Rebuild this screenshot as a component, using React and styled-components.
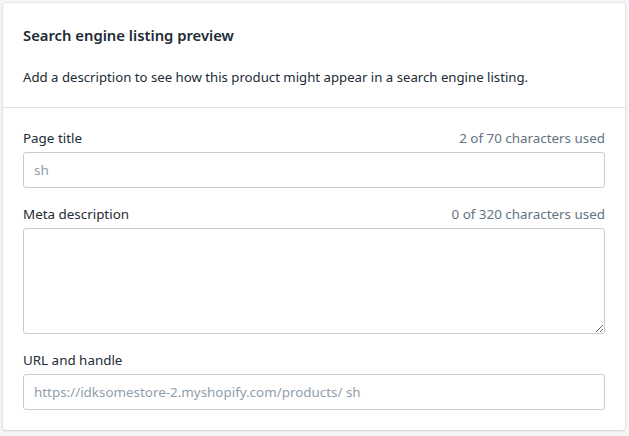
import React, { useState } from 'react';
import styled, { createGlobalStyle } from 'styled-components';

const GlobalStyle = createGlobalStyle`
  html, body {
    margin: 0;
    padding: 0;
    background-color: #f4f6f8;
  }
  body {
    font-family: "Noto Sans", "Open Sans", Arial, sans-serif;
    color: #212b36;
  }
  * {
    box-sizing: border-box;
  }
`;

const Page = styled.div`
  padding: 3px 4px 4px 3px;
`;

const Card = styled.section`
  background-color: #ffffff;
  border-radius: 3px;
  box-shadow: 0 0 0 1px rgba(63, 63, 68, 0.05), 0 1px 3px 0 rgba(63, 63, 68, 0.15);
`;

const Section = styled.div`
  padding: 20px;
  border-top: ${(p) => (p.divided ? '1px solid #dfe3e8' : 'none')};
`;

const Title = styled.h2`
  margin: 0;
  font-size: 14.8px;
  line-height: 24px;
  font-weight: 600;
`;

const Description = styled.p`
  margin: 20px 0 0;
  font-size: 13.2px;
  line-height: 20px;
`;

const Field = styled.div`
  display: flex;
  flex-direction: column;
  gap: 4px;
  & + & {
    margin-top: 16px;
  }
`;

const LabelRow = styled.div`
  display: flex;
  justify-content: space-between;
  align-items: center;
  font-size: 13.4px;
  line-height: 20px;
`;

const Label = styled.label``;

const Counter = styled.span`
  color: #637381;
`;

const inputStyles = `
  width: 100%;
  border: 1px solid #c4cdd5;
  border-radius: 3px;
  font-family: "Noto Sans", "Open Sans", Arial, sans-serif;
  font-size: 13.4px;
  color: #212b36;
  background: #ffffff;
  padding: 0 10px;
  outline: none;
  &::placeholder {
    color: #919eab;
  }
`;

const Input = styled.input`
  ${inputStyles}
  height: 36px;
`;

const TextArea = styled.textarea`
  ${inputStyles}
  display: block;
  height: 106px;
  padding: 8px 10px;
  resize: vertical;
`;

const App = () => {
  const [title, setTitle] = useState('');
  const [meta, setMeta] = useState('');
  const [handle, setHandle] = useState('');

  return (
    <>
      <GlobalStyle />
      <Page>
        <Card>
          <Section>
            <Title>Search engine listing preview</Title>
            <Description>
              Add a description to see how this product might appear in a search engine listing.
            </Description>
          </Section>
          <Section divided>
            <Field>
              <LabelRow>
                <Label>Page title</Label>
                <Counter>2 of 70 characters used</Counter>
              </LabelRow>
              <Input value={title} onChange={(e) => setTitle(e.target.value)} placeholder="sh" />
            </Field>
            <Field>
              <LabelRow>
                <Label>Meta description</Label>
                <Counter>0 of 320 characters used</Counter>
              </LabelRow>
              <TextArea value={meta} onChange={(e) => setMeta(e.target.value)} />
            </Field>
            <Field>
              <LabelRow>
                <Label>URL and handle</Label>
              </LabelRow>
              <Input
                value={handle}
                onChange={(e) => setHandle(e.target.value)}
                placeholder="https://idksomestore-2.myshopify.com/products/ sh"
              />
            </Field>
          </Section>
        </Card>
      </Page>
    </>
  );
};

export default App;
